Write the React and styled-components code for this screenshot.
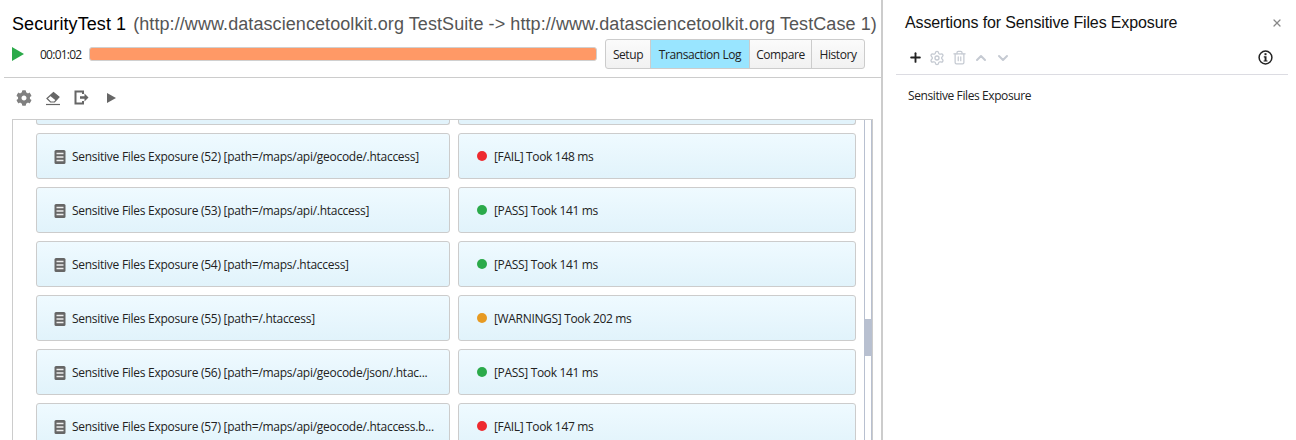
import React from "react";
import styled, { createGlobalStyle } from "styled-components";
import { FaCog } from "react-icons/fa";
import { Settings, Trash2, ChevronUp, ChevronDown, X, Plus } from "lucide-react";

const Global = createGlobalStyle`
  html, body { margin: 0; padding: 0; background: #fff; overflow: hidden; }
  body { font-family: "Open Sans", "Noto Sans", sans-serif; color: #111; }
`;

const Page = styled.div`display: flex; width: 1296px; height: 440px; overflow: hidden;`;
const Left = styled.section`width: 881px; flex: none; display: flex; flex-direction: column; border-right: 2px solid #ccc;`;
const Header = styled.header`height: 78px; flex: none; border-bottom: 1px solid #ccc; margin-left: 4px; padding: 0 0 0 8px; box-sizing: border-box;`;
const TitleLine = styled.h1`margin: 13px 0 0; font: 400 18px/22px "Liberation Sans", Arial, sans-serif; letter-spacing: 0.08px; white-space: nowrap; color: #000; display: flex; gap: 7px;`;
const Sub = styled.span`color: #555;`;
const RunRow = styled.div`display: flex; align-items: center; margin-top: 3px; height: 32px;`;
const RunButton = styled.button`border: 0; background: none; padding: 0; width: 28px; height: 16px; display: block;`;
const Time = styled.span`font-size: 12px; letter-spacing: -0.75px; width: 49px; flex: none; color: #222;`;
const Progress = styled.div`width: 508px; height: 14px; background: #ff9966; border: 1px solid #d0d0d0; border-radius: 3px; box-sizing: border-box; margin-right: 8px;`;
const Tabs = styled.div`display: flex; height: 30px; border: 1px solid #ccc; border-radius: 3px; box-sizing: border-box; background: linear-gradient(#fbfbfb, #f1f1f1);`;
const Tab = styled.div`
  display: flex; align-items: center; justify-content: center; width: ${p => p.$w}px; box-sizing: border-box; font-size: 12px; color: #222; letter-spacing: -0.42px;
  border-left: ${p => p.$first ? "0" : "1px solid #ccc"};
  background: ${p => p.$active ? "#99e5ff" : "transparent"};
`;
const Tools = styled.div`height: 41px; box-sizing: border-box; padding: 0 0 2px 16px; flex: none; display: flex; align-items: center; gap: 13px; color: #666;`;
const PlayTool = styled.span`margin-left: 5px;`;
const ListFrame = styled.div`flex: 1; min-height: 0; margin-left: 12px; margin-right: 8px; border: 1px solid #ccc; border-bottom: 0; display: flex; overflow: hidden;`;
const Rows = styled.div`width: 843px; flex: none; padding-left: 23px; box-sizing: border-box; display: flex; flex-direction: column; gap: 8px;`;
const Row = styled.div`display: grid; grid-template-columns: 414px 398px; gap: 8px; flex: none;`;
const Card = styled.div`
  height: ${p => p.$clipped ? 5 : 46}px; box-sizing: border-box; padding-top: ${p => p.$clipped ? 0 : 1}px;
  border: 1px solid #ccc; ${p => p.$clipped && "border-top: 0;"} border-radius: ${p => p.$clipped ? "0 0 3px 3px" : "3px"};
  background: ${p => p.$clipped ? "#e2f3fb" : "linear-gradient(#effaff, #e1f3fb)"};
  display: flex; align-items: center; font-size: 12px; color: #222; white-space: nowrap; overflow: hidden;
`;
const NameCard = styled(Card)`padding-left: 17px; gap: 6px; letter-spacing: -0.27px;`;
const ResultCard = styled(Card)`padding-left: 18px; gap: 7px; letter-spacing: -0.33px;`;
const Dot = styled.span`width: 10px; height: 10px; border-radius: 50%; background: ${p => p.$c}; flex: none; position: relative; top: -1px;`;
const Track = styled.div`width: 8px; margin-left: 8px; flex: none; border-left: 1px solid #b8c0d0; border-right: 1px solid #b8c0d0; box-sizing: border-box; position: relative;`;
const Thumb = styled.div`position: absolute; left: 0; right: 0; top: 199px; height: 37px; background: #b8c0d0;`;

const Right = styled.aside`flex: 1; padding: 0 8px 0 13px; min-width: 0;`;
const PanelHead = styled.div`height: 45px; display: flex; align-items: center; justify-content: space-between; padding: 0 5px 0 9px; box-sizing: border-box;`;
const PanelTitle = styled.h2`margin: 0; font: 400 16px "Liberation Sans", Arial, sans-serif; letter-spacing: -0.13px; color: #111;`;
const PanelTools = styled.div`height: 30px; box-sizing: border-box; display: flex; align-items: center; gap: 4px; padding: 0 15px 4px 10px; border-bottom: 1px solid #dcdce2; color: #c5cad2;`;
const ToolSlot = styled.span`width: 18px; height: 18px; display: flex; align-items: center; justify-content: center;`;
const Spacer = styled.div`flex: 1;`;
const Assertion = styled.div`font-size: 12px; letter-spacing: -0.4px; color: #222; margin: 12px 0 0 12px;`;

const DocIcon = () => (
  <svg width="12" height="14" viewBox="0 0 12 14" style={{ flex: "none" }}>
    <rect x="0.5" width="11" height="14" rx="1.5" fill="#666" />
    <path d="M2.5 3.5h7M2.5 7h7M2.5 10.5h7" stroke="#eee" strokeWidth="1.3" />
  </svg>
);
const Play = ({ w, h, color }) => (
  <svg width={w} height={h} viewBox="0 0 14 14" preserveAspectRatio="none" style={{ display: "block" }}>
    <path d="M0 0L14 7L0 14Z" fill={color} />
  </svg>
);
const EraserIcon = () => (
  <svg width="16" height="16" viewBox="0 0 16 16" style={{ display: "block" }}>
    <path d="M2 8.5L8.5 2.5L14 7L9.5 12H5.5Z" fill="#fff" stroke="#666" strokeWidth="1.2" />
    <path d="M8.5 2.5L14 7L10.8 10.6L5 5.7Z" fill="#666" />
    <path d="M1 14.5H15" stroke="#666" strokeWidth="1.2" />
  </svg>
);
const ExitIcon = () => (
  <svg width="15" height="15" viewBox="0 0 15 15" style={{ display: "block" }}>
    <path d="M9 4V1.5H1.5V13.5H9V11" fill="none" stroke="#666" strokeWidth="2" />
    <path d="M6 6.3H10.5V3.6L14.5 7.5L10.5 11.4V8.7H6Z" fill="#666" />
  </svg>
);
const InfoIcon = () => (
  <svg width="15" height="15" viewBox="0 0 15 15" style={{ display: "block" }}>
    <circle cx="7.5" cy="7.5" r="6.4" fill="none" stroke="#222" strokeWidth="1.5" />
    <rect x="6.5" y="3.2" width="2" height="2" fill="#222" />
    <path d="M5.8 6.3H8.5V10.4H9.5V11.6H5.6V10.4H6.6V7.5H5.8Z" fill="#222" />
  </svg>
);

const data = [
  ["Sensitive Files Exposure (52) [path=/maps/api/geocode/.htaccess]", "[FAIL] Took 148 ms", "#ee2a2f"],
  ["Sensitive Files Exposure (53) [path=/maps/api/.htaccess]", "[PASS] Took 141 ms", "#2baa4a"],
  ["Sensitive Files Exposure (54) [path=/maps/.htaccess]", "[PASS] Took 141 ms", "#2baa4a"],
  ["Sensitive Files Exposure (55) [path=/.htaccess]", "[WARNINGS] Took 202 ms", "#e79a22"],
  ["Sensitive Files Exposure (56) [path=/maps/api/geocode/json/.htac...", "[PASS] Took 141 ms", "#2baa4a"],
  ["Sensitive Files Exposure (57) [path=/maps/api/geocode/.htaccess.b...", "[FAIL] Took 147 ms", "#ee2a2f"],
];

export default function App() {
  return (
    <Page>
      <Global />
      <Left>
        <Header>
          <TitleLine>SecurityTest 1 <Sub>(http://www.datasciencetoolkit.org TestSuite -&gt; http://www.datasciencetoolkit.org TestCase 1)</Sub></TitleLine>
          <RunRow>
            <RunButton><Play w={12} h={14} color="#2baa4a" /></RunButton>
            <Time>00:01:02</Time>
            <Progress />
            <Tabs>
              <Tab $first $w={44}>Setup</Tab>
              <Tab $active $w={99}>Transaction Log</Tab>
              <Tab $w={62}>Compare</Tab>
              <Tab $w={53}>History</Tab>
            </Tabs>
          </RunRow>
        </Header>
        <Tools>
          <FaCog size={16} color="#808080" />
          <EraserIcon />
          <ExitIcon />
          <PlayTool><Play w={9} h={10} color="#666" /></PlayTool>
        </Tools>
        <ListFrame>
          <Rows>
            <Row><Card $clipped /><Card $clipped /></Row>
            {data.map(([name, result, color]) => (
              <Row key={name}>
                <NameCard><DocIcon />{name}</NameCard>
                <ResultCard><Dot $c={color} />{result}</ResultCard>
              </Row>
            ))}
          </Rows>
          <Track><Thumb /></Track>
        </ListFrame>
      </Left>
      <Right>
        <PanelHead>
          <PanelTitle>Assertions for Sensitive Files Exposure</PanelTitle>
          <X size={12} color="#888" strokeWidth={2.5} />
        </PanelHead>
        <PanelTools>
          <ToolSlot><Plus size={15} color="#222" strokeWidth={3} /></ToolSlot>
          <ToolSlot><Settings size={16} strokeWidth={2} /></ToolSlot>
          <ToolSlot><Trash2 size={15} /></ToolSlot>
          <ToolSlot><ChevronUp size={16} strokeWidth={3} /></ToolSlot>
          <ToolSlot><ChevronDown size={16} strokeWidth={3} /></ToolSlot>
          <Spacer />
          <InfoIcon />
        </PanelTools>
        <Assertion>Sensitive Files Exposure</Assertion>
      </Right>
    </Page>
  );
}
